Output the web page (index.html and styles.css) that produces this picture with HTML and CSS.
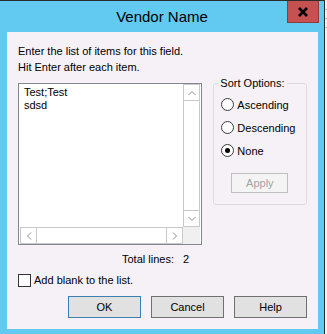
FILE: index.html
```html
<!DOCTYPE html>
<html lang="en">
<head>
    <meta charset="UTF-8">
    <title>Vendor Name</title>
    <link rel="stylesheet" href="styles.css">
</head>
<body>
<div class="screen">
    <div class="window">
        <div class="titlebar">
            <span class="title">Vendor Name</span>
            <span class="close">
                <svg width="12" height="10" viewBox="0 0 12 10"><path d="M2 1 L10 9 M10 1 L2 9" stroke="#000" stroke-width="2.6" fill="none"/></svg>
            </span>
        </div>
        <div class="client">
            <p class="hint">Enter the list of items for this field.<br>Hit Enter after each item.</p>

            <div class="main">
                <!-- list box with both scrollbars -->
                <div class="listbox">
                    <div class="items">Test;Test<br>sdsd</div>
                    <div class="vscroll">
                        <span class="sb-btn"><svg width="8" height="6" viewBox="0 0 8 6"><polyline points="0.5,5 4,1.5 7.5,5" class="chev"/></svg></span>
                        <span class="track"></span>
                        <span class="sb-btn"><svg width="8" height="6" viewBox="0 0 8 6"><polyline points="0.5,1 4,4.5 7.5,1" class="chev"/></svg></span>
                    </div>
                    <div class="hscroll">
                        <span class="sb-btn"><svg width="6" height="8" viewBox="0 0 6 8"><polyline points="5,0.5 1.5,4 5,7.5" class="chev"/></svg></span>
                        <span class="track"></span>
                        <span class="sb-btn"><svg width="6" height="8" viewBox="0 0 6 8"><polyline points="1,0.5 4.5,4 1,7.5" class="chev"/></svg></span>
                    </div>
                    <div class="corner"></div>
                </div>

                <fieldset class="sort">
                    <legend>Sort Options:</legend>
                    <label class="radio"><span class="dot"></span>Ascending</label>
                    <label class="radio"><span class="dot"></span>Descending</label>
                    <label class="radio"><span class="dot checked"></span>None</label>
                    <button class="apply" disabled>Apply</button>
                </fieldset>
            </div>

            <div class="total"><span class="total-label">Total lines:</span><span>2</span></div>

            <label class="check"><span class="box"></span>Add blank to the list.</label>

            <div class="buttons">
                <button class="btn default">OK</button>
                <button class="btn">Cancel</button>
                <button class="btn">Help</button>
            </div>
        </div>
    </div>
    <div class="backdrop">
        <span class="rule"></span>
        <span class="rule"></span>
        <span class="rule"></span>
    </div>
</div>
</body>
</html>
```
FILE: styles.css
```css
* {
    box-sizing: border-box;
}
body {
    margin: 0;
    font-family: "Liberation Sans", Arial, sans-serif;
    font-size: 11px;
    color: #000;
}
.screen {
    display: flex;
    width: 327px;
    height: 334px;
    overflow: hidden;
    background: #f2f2f2;
}
.window {
    width: 324px;
    height: 334px;
    flex: none;
    background: #62c9f0;
    border-top: 1px solid #2c2c2c;
    display: flex;
    flex-direction: column;
}
.titlebar {
    height: 31px;
    flex: none;
    display: grid;
    grid-template-columns: 1fr auto 1fr;
    padding: 0 5px;
}
.title {
    grid-column: 2;
    font-size: 15px;
    line-height: 32px;
}
.close {
    grid-column: 3;
    justify-self: end;
    align-self: start;
    width: 32px;
    height: 22px;
    background: #c75050;
    border: 1px solid #8c3c3c;
    border-top: none;
    display: flex;
    align-items: center;
    justify-content: center;
}
.client {
    background: #f6f1f6;
    margin: 0 6px 0 7px;
    height: 297px;
    flex: none;
    padding: 11px;
    display: flex;
    flex-direction: column;
}
.hint {
    margin: 0;
    line-height: 16px;
}
.main {
    display: flex;
    align-items: flex-start;
    margin-top: 2px;
}

/* list box */
.listbox {
    width: 185px;
    height: 162px;
    margin-top: 6px;
    border: 1px solid #828790;
    background: #fff;
    padding: 0 1px;
    display: grid;
    grid-template-columns: 1fr 17px;
    grid-template-rows: 1fr 17px;
}
.items {
    padding: 2px 4px;
    line-height: 13px;
}
.vscroll, .hscroll {
    display: flex;
    border: 1px solid #c8c8c8;
    background: #fff;
}
.vscroll {
    flex-direction: column;
}
.track {
    flex: 1;
}
.sb-btn {
    flex: none;
    width: 15px;
    height: 15px;
    display: flex;
    align-items: center;
    justify-content: center;
}
.vscroll .sb-btn:first-child { border-bottom: 1px solid #c8c8c8; height: 16px; }
.vscroll .sb-btn:last-child { border-top: 1px solid #c8c8c8; height: 16px; }
.hscroll .sb-btn:first-child { border-right: 1px solid #c8c8c8; width: 16px; }
.hscroll .sb-btn:last-child { border-left: 1px solid #c8c8c8; width: 16px; }
.chev {
    fill: none;
    stroke: #8f8f8f;
    stroke-width: 1;
}
.corner {
    background: #f0f0f0;
}

/* sort options group */
.sort {
    margin: 0 0 0 11px;
    width: 94px;
    padding: 3px 0 11px 0;
    border: 1px solid #dcdcdc;
    border-radius: 3px;
    display: flex;
    flex-direction: column;
    min-width: 0;
}
.sort legend {
    margin-left: 4px;
    padding: 0 2px;
    line-height: 13px;
}
.radio {
    height: 23px;
    padding-left: 7px;
    display: flex;
    align-items: center;
}
.dot {
    width: 13px;
    height: 13px;
    margin-right: 3px;
    border: 1px solid #3c3c3c;
    border-radius: 50%;
    background: #fff;
    display: flex;
    align-items: center;
    justify-content: center;
}
.dot.checked::after {
    content: "";
    width: 5px;
    height: 5px;
    border-radius: 50%;
    background: #000;
}
.apply {
    margin: 11px 0 0 17px;
    width: 57px;
    height: 20px;
    border: 1px solid #bfbfbf;
    background: #f4f4f4;
    color: #a3a3a3;
    font: inherit;
    padding: 0;
}

.total {
    margin-top: 6px;
    line-height: 16px;
    padding-left: 104px;
}
.total-label {
    display: inline-block;
    width: 61px;
}
.check {
    margin-top: 5px;
    height: 16px;
    display: flex;
    align-items: center;
}
.box {
    width: 13px;
    height: 13px;
    margin-right: 3px;
    border: 1px solid #333;
    background: #fff;
}
.buttons {
    margin-top: 8px;
    display: flex;
    justify-content: flex-end;
    gap: 10px;
}
.btn {
    width: 73px;
    height: 22px;
    border: 1px solid #707070;
    background: #e1e1e1;
    font: inherit;
    color: #000;
    padding: 0;
}
.btn.default {
    border-color: #3c7fb1;
}

.backdrop {
    flex: 1;
    border-left: 1px solid #2d2d2d;
    display: flex;
    flex-direction: column;
    padding-top: 9px;
    gap: 8px;
}
.rule {
    height: 1px;
    background: #b8b8b8;
}
```
